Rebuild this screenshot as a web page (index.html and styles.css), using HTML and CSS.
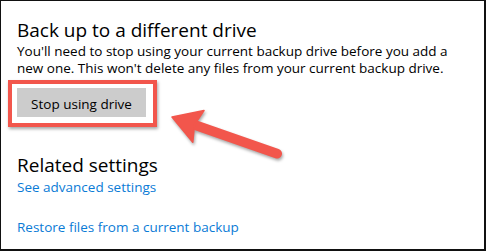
FILE: index.html
```html
<!DOCTYPE html>
<html>
<head>
<meta charset="utf-8">
<link rel="stylesheet" href="styles.css">
</head>
<body>
<div class="frame">
  <section class="section">
    <h2 class="title">Back up to a different drive</h2>
    <p class="desc">You'll need to stop using your current backup drive before you add a new one. This won't delete any files from your current backup drive.</p>
    <div class="btn-wrap"><button class="btn">Stop using drive</button></div>
  </section>
  <section class="section related">
    <h2 class="title">Related settings</h2>
    <a class="link">See advanced settings</a>
    <a class="link restore">Restore files from a current backup</a>
  </section>
  <svg class="arrow" width="486" height="251" viewBox="0 0 486 251">
    <g fill="#f2564c" stroke="#f2564c">
      <line x1="190" y1="122.6" x2="276" y2="152.6" stroke-width="10" stroke-linecap="round"/>
      <polygon points="171,116 203,109.5 193.5,123.8 191.8,141.2" stroke-width="1.5" stroke-linejoin="round"/>
    </g>
  </svg>
</div>
</body>
</html>
```

FILE: styles.css
```css
html, body {
  margin: 0;
  padding: 0;
  background: #fff;
}
.frame {
  position: relative;
  width: 486px;
  height: 251px;
  box-sizing: border-box;
  border-style: solid;
  border-color: #111;
  border-width: 1px 2px 2px 1px;
  padding: 17px 16px 0 16px;
  font-family: "Open Sans", "Noto Sans", sans-serif;
  color: #000;
  overflow: hidden;
}
.section {
  display: flex;
  flex-direction: column;
  align-items: flex-start;
}
.title {
  margin: 0;
  font-size: 19px;
  font-weight: 400;
  line-height: 24px;
}
.desc {
  margin: 1px 0 0 0;
  font-size: 13.5px;
  line-height: 17px;
}
.btn-wrap {
  position: relative;
  margin-top: 11px;
}
.btn-wrap::after {
  content: "";
  position: absolute;
  left: -9px;
  top: -8px;
  right: -11px;
  bottom: -10px;
  border: 4px solid #f2564c;
  box-shadow: 1px 2px 3px rgba(0,0,0,0.35);
  pointer-events: none;
}
.btn {
  display: block;
  width: 129px;
  height: 29px;
  border: none;
  background: #cccccc;
  font-family: inherit;
  font-size: 13.5px;
  color: #000;
  padding: 2px 0 0 0;
}
.related {
  margin-top: 36px;
}
.related .title {
  margin-bottom: 1px;
}
.link {
  color: #0a7bd6;
  font-size: 13.5px;
  line-height: 18px;
}
.restore {
  margin-top: 22px;
}
.arrow {
  position: absolute;
  left: 0;
  top: 0;
  filter: drop-shadow(1px 2px 1.5px rgba(0,0,0,0.35));
  pointer-events: none;
}
```
